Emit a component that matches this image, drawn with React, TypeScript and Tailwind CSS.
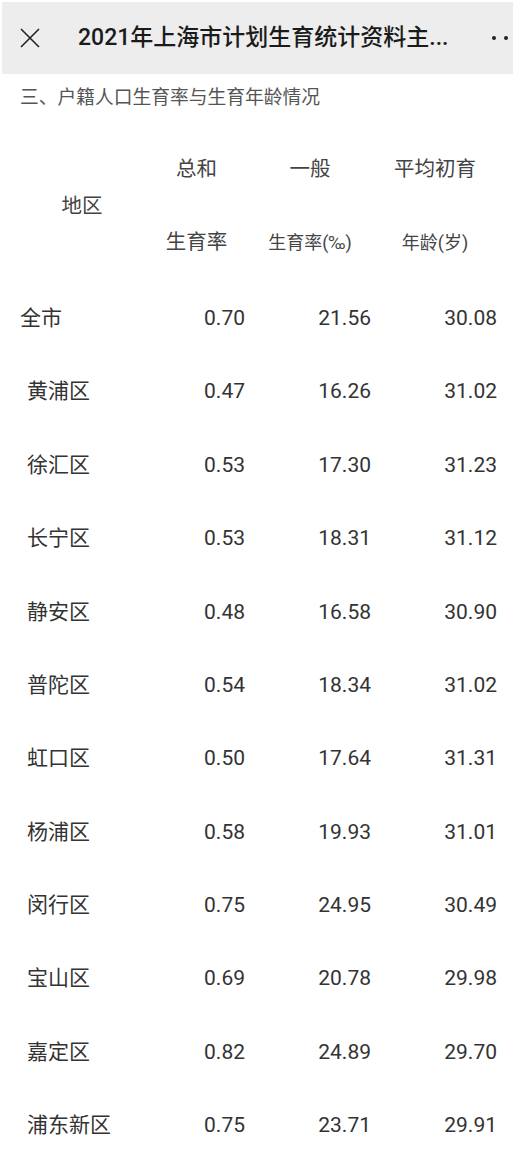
import React from "react";

const rows: [string, string, string, string][] = [
  ["全市", "0.70", "21.56", "30.08"],
  ["黄浦区", "0.47", "16.26", "31.02"],
  ["徐汇区", "0.53", "17.30", "31.23"],
  ["长宁区", "0.53", "18.31", "31.12"],
  ["静安区", "0.48", "16.58", "30.90"],
  ["普陀区", "0.54", "18.34", "31.02"],
  ["虹口区", "0.50", "17.64", "31.31"],
  ["杨浦区", "0.58", "19.93", "31.01"],
  ["闵行区", "0.75", "24.95", "30.49"],
  ["宝山区", "0.69", "20.78", "29.98"],
  ["嘉定区", "0.82", "24.89", "29.70"],
  ["浦东新区", "0.75", "23.71", "29.91"],
];

const font = { fontFamily: "Roboto, 'Noto Sans CJK SC', sans-serif" };

export default function App() {
  return (
    <div className="w-[515px] h-[1153px] overflow-hidden bg-white text-[#333]" style={font}>
      {/* Top bar */}
      <div className="mx-[2px] mt-[2px] h-[72px] bg-[#ededed] flex items-center overflow-hidden">
        <svg width="20" height="20" viewBox="0 0 20 20" className="ml-[18px] shrink-0">
          <path d="M1 1 L19 19 M19 1 L1 19" stroke="#222" strokeWidth="1.6" fill="none" />
        </svg>
        <div className="ml-[38px] text-[23px] font-medium text-[#1b1b1b] whitespace-nowrap">
          2021年上海市计划生育统计资料主...
        </div>
        <div className="ml-auto mr-[-7px] flex gap-[7.5px] shrink-0">
          <span className="w-[4.5px] h-[4.5px] rounded-full bg-[#222]" />
          <span className="w-[4.5px] h-[4.5px] rounded-full bg-[#222]" />
          <span className="w-[4.5px] h-[4.5px] rounded-full bg-[#222]" />
        </div>
      </div>

      {/* Subtitle */}
      <div className="h-[48px] flex items-center pl-[20px] text-[18.75px] text-[#555]">
        三、户籍人口生育率与生育年龄情况
      </div>

      {/* Table header */}
      <div className="mt-[11px] grid grid-cols-[160px_85px_126px_126px] grid-rows-[73px_73px] text-[#444]">
        <div className="row-span-2 flex items-center justify-center pl-[4px] text-[20.5px]">地区</div>
        <div className="flex items-center justify-center pr-[12px] text-[20.5px]">总和</div>
        <div className="flex items-center justify-center pl-[4px] text-[20.5px]">一般</div>
        <div className="flex items-center justify-center pl-[2px] text-[20.5px]">平均初育</div>
        <div className="flex items-center justify-center pr-[12px] text-[20.5px]">生育率</div>
        <div className="flex items-center justify-center pl-[4px] text-[18px]">生育率(‰)</div>
        <div className="flex items-center justify-center pl-[2px] text-[18px]">年龄(岁)</div>
      </div>

      {/* Data rows */}
      <div className="mt-[3px]">
        {rows.map((r, i) => (
          <div
            key={r[0]}
            className="grid grid-cols-[160px_85px_126px_126px] h-[73.4px] items-center text-[21px]"
          >
            <div className={i === 0 ? "pl-[20px]" : "pl-[27px]"}>{r[0]}</div>
            <div className="text-right">{r[1]}</div>
            <div className="text-right">{r[2]}</div>
            <div className="text-right">{r[3]}</div>
          </div>
        ))}
      </div>
    </div>
  );
}
